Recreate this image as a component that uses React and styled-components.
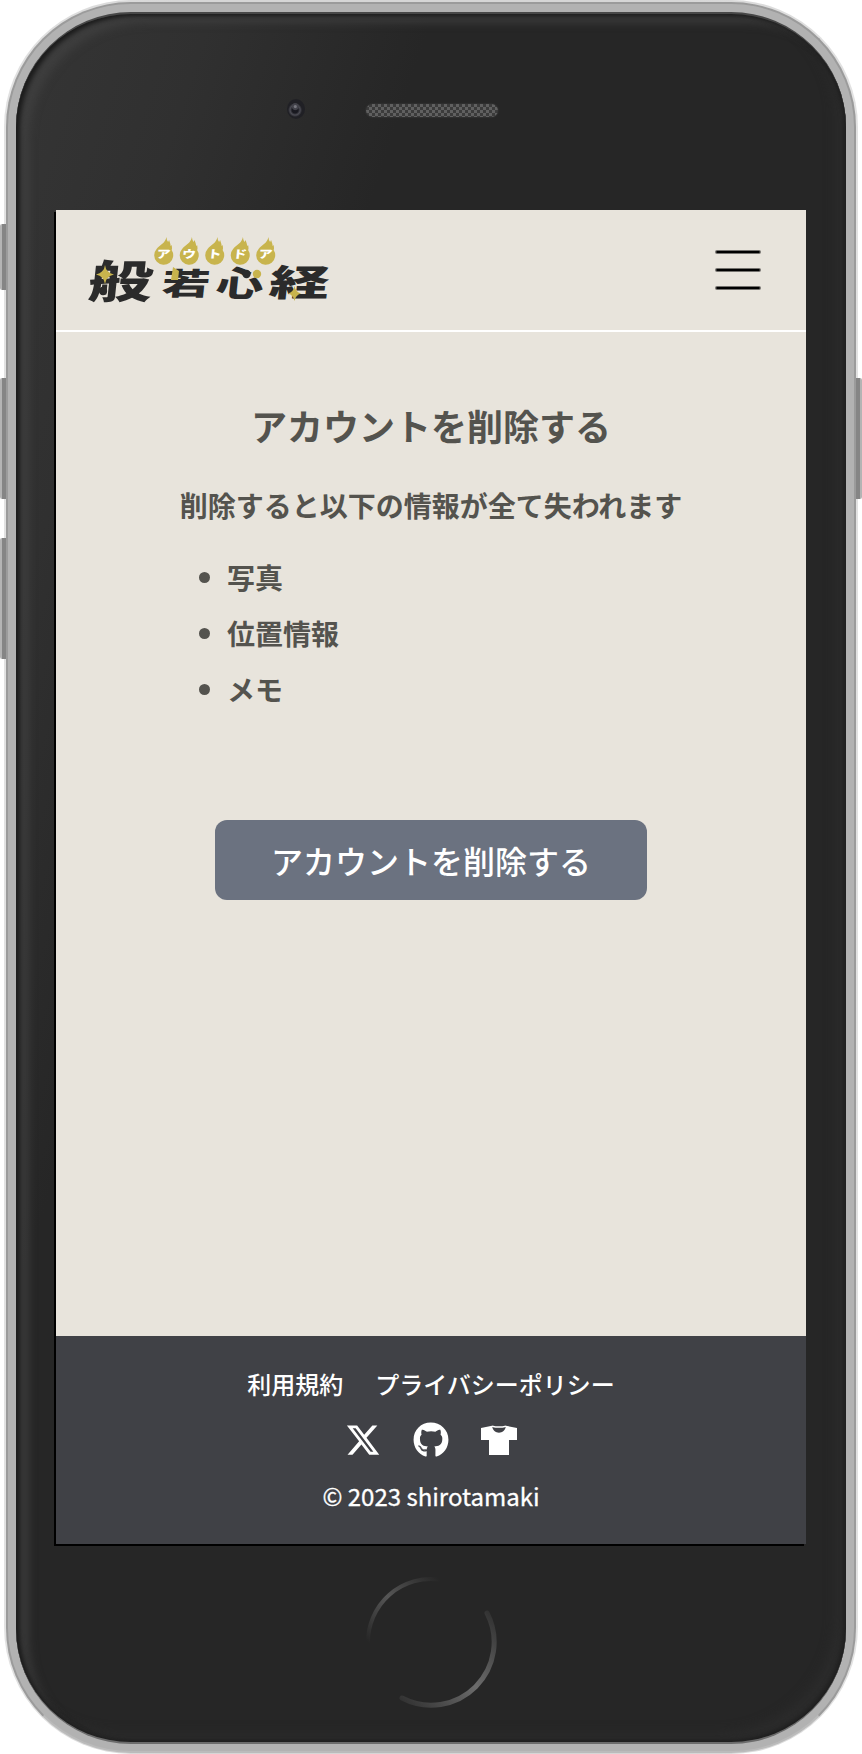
import React from 'react';
import styled, { createGlobalStyle } from 'styled-components';
import { FaGithub, FaXTwitter } from 'react-icons/fa6';

const GlobalStyle = createGlobalStyle`
  * { box-sizing: border-box; }
  body { margin: 0; background: #fff; font-family: "Noto Sans CJK JP", sans-serif; }
`;

const Stage = styled.div`
  position: relative;
  width: 862px;
  height: 1754px;
  padding: 0 4px;
  overflow: hidden;
`;

const SideButton = styled.i`
  position: absolute;
  top: ${(p) => p.$top}px;
  ${(p) => p.$side}: 0;
  width: 6px;
  height: ${(p) => p.$height}px;
  border-radius: ${(p) => (p.$side === 'left' ? '2px 0 0 2px' : '0 2px 2px 0')};
  background: linear-gradient(to ${(p) => (p.$side === 'left' ? 'right' : 'left')}, #b4b4b4 0 2px, #858585 2px 6px);
`;

const Rim = styled.div`
  height: 1754px;
  padding: 2px;
  border-radius: 127px;
  background: linear-gradient(90deg, #e2e2e2, #d6d6d6 20%, #d6d6d6 80%, #e2e2e2);
`;

const Frame = styled.div`
  height: 1751px;
  padding: 8px;
  border: 2px solid #9b9b9b;
  border-bottom-color: #bbb;
  border-radius: 125px;
  background: #b2b2b2;
`;

const Bezel = styled.div`
  display: flex;
  flex-direction: column;
  height: 1732px;
  padding: 0 40px;
  border-top: 2px solid #484848;
  border-bottom: 2px solid #6c6c6c;
  border-radius: 115px;
  background: linear-gradient(108deg, #353535 0, #303030 14%, #262626 30%, #262626 100%);
  box-shadow: inset 4px 2px 4px #1c1c1c, inset -3px -2px 4px #202020,
    inset 16px 12px 8px -3px rgba(67, 67, 67, 0.65), inset -14px -12px 12px -4px #2c2c2c;
`;

const TopBezel = styled.div`
  display: flex;
  flex: 0 0 196px;
  padding: 85px 0 0 231px;
`;

const Camera = styled.div`
  width: 18px;
  height: 20px;
  margin-right: 61px;
  border-radius: 50%;
  background: radial-gradient(circle at 46% 38%, #77777f 0 1px, #42424a 2px 3px, transparent 4px),
    radial-gradient(circle at 45% 55%, #191920 0 3px, #4b4b53 5px, #202025 7px, #202025 9px);
`;

const Speaker = styled.div`
  width: 132px;
  height: 13px;
  margin-top: 5px;
  border-radius: 7px;
  background: repeating-conic-gradient(#3b3b3b 0 25%, #606060 0 50%) 0 0 / 6px 6px;
  box-shadow: 0 0 2px #444;
`;

const Screen = styled.div`
  display: flex;
  flex: 0 0 1334px;
  flex-direction: column;
  width: 750px;
  background: #e8e4dc;
  box-shadow: -2px 2px 0 #000;
`;

const Header = styled.header`
  display: flex;
  flex: 0 0 122px;
  justify-content: space-between;
  padding: 10px 45px 0 14px;
  border-bottom: 2px solid #fff;
`;

const Menu = styled.button`
  display: flex;
  flex-direction: column;
  justify-content: space-between;
  width: 46px;
  height: 40px;
  margin-top: 30px;
  padding: 0;
  border: 0;
  background: none;
`;

const MenuLine = styled.span`
  height: 4px;
  border: 1px solid rgba(0, 0, 0, 0.5);
  border-radius: 2px;
  background: #000;
  background-clip: padding-box;
`;

const Main = styled.main`
  display: flex;
  flex: 1;
  flex-direction: column;
  align-items: center;
  padding-top: 65px;
  color: #54534e;
`;

const Title = styled.h1`
  margin: 0;
  font-size: 36px;
  font-weight: 700;
  line-height: 56px;
`;

const Lead = styled.p`
  margin: 24px 0 16px;
  font-size: 28px;
  font-weight: 700;
  line-height: 56px;
`;

const List = styled.ul`
  width: 504px;
  margin: 0;
  padding: 0 0 0 20px;
  list-style: none;
`;

const Item = styled.li`
  display: flex;
  align-items: center;
  gap: 17px;
  font-size: 28px;
  font-weight: 700;
  line-height: 56px;

  &::before {
    width: 11px;
    height: 11px;
    border-radius: 50%;
    background: currentColor;
    content: '';
  }
`;

const DeleteButton = styled.button`
  width: 432px;
  height: 80px;
  margin-top: 103px;
  padding: 0;
  border: 0;
  border-radius: 12px;
  background: #6b7280;
  color: #fff;
  font: 500 32px/80px "Noto Sans CJK JP", sans-serif;
`;

const Footer = styled.footer`
  display: flex;
  flex: 0 0 208px;
  flex-direction: column;
  align-items: center;
  padding-top: 30px;
  background: #404146;
  color: #fff;
  font-size: 24px;
  font-weight: 500;
`;

const Links = styled.nav`
  display: flex;
  gap: 32px;
  line-height: 36px;
`;

const Socials = styled.div`
  display: flex;
  align-items: center;
  gap: 32px;
  height: 36px;
  margin-top: 20px;
`;

const Copyright = styled.small`
  margin-top: 20px;
  font-size: 24px;
  font-weight: 400;
  line-height: 36px;
  -webkit-text-stroke: 0.3px #fff;
`;

const BottomBezel = styled.div`
  display: flex;
  justify-content: center;
  padding-top: 32px;
`;

const kanji = [
  { char: '般', x: 87, y: 298, sx: 2.0, sy: 1.4 },
  { char: '若', x: 161, y: 295, sx: 1.5, sy: 0.96 },
  { char: '心', x: 215, y: 296, sx: 1.48, sy: 1.08 },
  { char: '経', x: 268, y: 295.5, sx: 1.88, sy: 1.14 },
];

const flames = ['ア', 'ウ', 'ト', 'ド', 'ア'];

function Logo() {
  return (
    <svg width="280" height="100" viewBox="70 220 280 100" role="img" aria-label="アウトドア般若心経">
      <g fill="#2b2b2b" fontSize="32" fontWeight="900" fontFamily="Noto Sans CJK JP, sans-serif">
        {kanji.map((k) => (
          <text key={k.char} transform={`translate(${k.x} ${k.y}) skewX(-6) scale(${k.sx} ${k.sy})`}>
            {k.char}
          </text>
        ))}
      </g>
      {flames.map((char, i) => (
        <g key={i} transform={`translate(${163.6 + i * 25.5} 254)`}>
          <path
            fill="#c8b44d"
            d="M2.8-17Q3-14 4.5-12L5.5-14Q7-10 7-8L8-9Q8.8-5 8-4A9.5 9.5 0 1 1-7-5C-4-9 2-11 2.8-17Z"
          />
          <text
            x="0"
            y="4.4"
            textAnchor="middle"
            fill="#fff"
            fontSize="12"
            fontWeight="900"
            transform="skewX(-6) scale(1.15 0.9)"
          >
            {char}
          </text>
        </g>
      ))}
      <path fill="#c8b44d" d="M105 265Q106 273 114 274.5Q106 276 105 284Q104 276 96 274.5Q104 273 105 265Z" />
      <path fill="#c8b44d" d="M294.5 286Q295.5 292 301 293.5Q295.5 295 294.5 301Q293.5 295 288 293.5Q293.5 292 294.5 286Z" />
      <path fill="#c8b44d" d="M173 267L179 271L178 280H171Z" />
      <circle fill="#2b2b2b" cx="103" cy="291" r="4.2" />
      <circle fill="#2b2b2b" cx="246.5" cy="274" r="4.2" />
      <circle fill="#c8b44d" cx="257" cy="274" r="4.2" />
    </svg>
  );
}

function Shirt() {
  return (
    <svg width="36" height="30" viewBox="0 0 36 30" fill="#fff">
      <path d="M0 3 11 0.8C12 10 24 10 25 0.8L36 3V15H28V30H8V15H0Z" />
      <path d="M11 1.2Q18 3 25 1.2" fill="none" stroke="#fff" strokeWidth="1.5" />
    </svg>
  );
}

export default function App() {
  return (
    <>
      <GlobalStyle />
      <Stage>
        <SideButton $side="left" $top={224} $height={66} />
        <SideButton $side="left" $top={378} $height={121} />
        <SideButton $side="left" $top={538} $height={121} />
        <SideButton $side="right" $top={378} $height={121} />
        <Rim>
          <Frame>
            <Bezel>
              <TopBezel>
                <Camera />
                <Speaker />
              </TopBezel>
              <Screen>
                <Header>
                  <Logo />
                  <Menu aria-label="メニュー">
                    <MenuLine />
                    <MenuLine />
                    <MenuLine />
                  </Menu>
                </Header>
                <Main>
                  <Title>アカウントを削除する</Title>
                  <Lead>削除すると以下の情報が全て失われます</Lead>
                  <List>
                    <Item>写真</Item>
                    <Item>位置情報</Item>
                    <Item>メモ</Item>
                  </List>
                  <DeleteButton>アカウントを削除する</DeleteButton>
                </Main>
                <Footer>
                  <Links>
                    <span>利用規約</span>
                    <span>プライバシーポリシー</span>
                  </Links>
                  <Socials>
                    <FaXTwitter size={36} />
                    <FaGithub size={36} />
                    <Shirt />
                  </Socials>
                  <Copyright>© 2023 shirotamaki</Copyright>
                </Footer>
              </Screen>
              <BottomBezel>
                <svg width="132" height="132" viewBox="0 0 132 132" fill="none" strokeLinecap="round">
                  <defs>
                    <linearGradient id="upper" x1="0" y1="1" x2="1" y2="0">
                      <stop offset="0" stopColor="#262626" />
                      <stop offset="0.5" stopColor="#565656" />
                      <stop offset="1" stopColor="#262626" />
                    </linearGradient>
                    <linearGradient id="lower" x1="0" y1="1" x2="1" y2="0">
                      <stop offset="0" stopColor="#303030" />
                      <stop offset="0.5" stopColor="#6c6c6c" />
                      <stop offset="1" stopColor="#303030" />
                    </linearGradient>
                  </defs>
                  <path d="M3 66A63 63 0 0 1 74 3.5" stroke="url(#upper)" strokeWidth="4" />
                  <path d="M122 37A63 63 0 0 1 37 122" stroke="url(#lower)" strokeWidth="5" />
                </svg>
              </BottomBezel>
            </Bezel>
          </Frame>
        </Rim>
      </Stage>
    </>
  );
}
